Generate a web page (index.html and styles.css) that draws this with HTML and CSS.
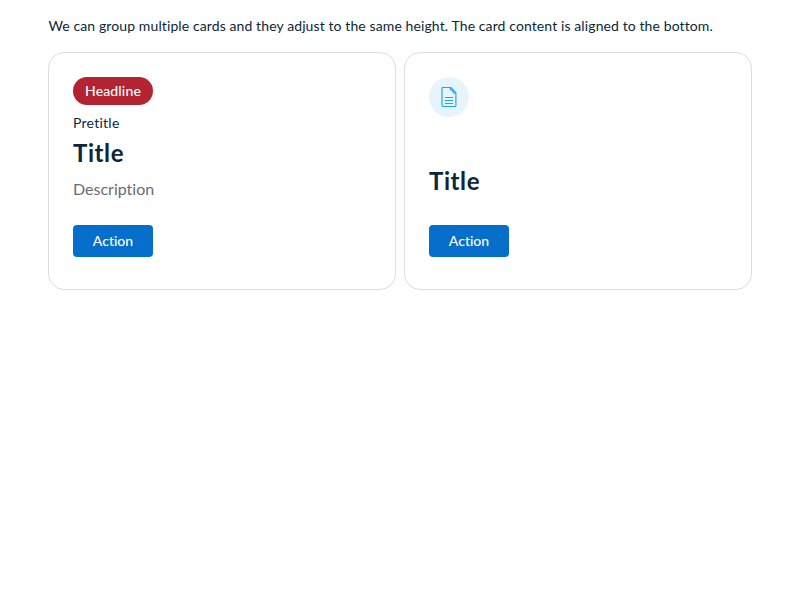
FILE: index.html
```html
<!DOCTYPE html>
<html lang="en">
<head>
<meta charset="utf-8">
<title>Card group</title>
<link rel="stylesheet" href="styles.css">
</head>
<body>
<main class="page">
  <p class="intro">We can group multiple cards and they adjust to the same height. The card content is aligned to the bottom.</p>
  <div class="card-group">
    <article class="card">
      <div class="card-header"><span class="pill">Headline</span></div>
      <div class="card-content">
        <p class="pretitle">Pretitle</p>
        <h2 class="title">Title</h2>
        <p class="description">Description</p>
        <button class="button">Action</button>
      </div>
    </article>
    <article class="card">
      <div class="card-header">
        <span class="asset">
          <svg width="24" height="24" viewBox="0 0 24 24" fill="none" stroke="#1fa4f0" stroke-width="1.15" stroke-linejoin="round" stroke-linecap="round"><path d="M5.5 2.5h8.2l5.2 5.1v13a.9.9 0 0 1-.9.9H5.9a.9.9 0 0 1-.9-.9V3a.5.5 0 0 1 .5-.5zM13.3 2.8c0 .9-.2 1.5.4 2.1.6.5 1.4.2 1.8.7.5.5.2 1.4.8 1.9.6.6 1.5.5 2.5.5M8.4 12.5h7.2M8.4 15.5h7.2M8.4 18.5h7.2"/></svg>
        </span>
      </div>
      <div class="card-content">
        <h2 class="title">Title</h2>
        <button class="button button-spaced">Action</button>
      </div>
    </article>
  </div>
</main>
</body>
</html>
```
FILE: styles.css
```css
* { box-sizing: border-box; }
body { margin: 0; background: #fff; color: #0b2739; font-family: Lato, "Noto Sans", sans-serif; font-variant-ligatures: none; }
p, h2 { margin: 0; }
.page { padding: 16px 48px; }
.intro { padding-left: 0.5px; font-size: 14px; line-height: 20px; white-space: nowrap; font-weight: 400; letter-spacing: 0.105px; }
.card-group { display: grid; grid-template-columns: 1fr 1fr; gap: 8px; margin-top: 16px; }
.card { display: flex; flex-direction: column; justify-content: space-between; height: 238px; padding: 24px 24px 32px; border: 1px solid #dddddd; border-radius: 16px; }
.card-header { display: flex; }
.pill { height: 28px; width: 80px; border-radius: 14px; background: #b32433; color: #fff; font-size: 14px; font-weight: 500; line-height: 28px; letter-spacing: 0.15px; text-align: center; }
.asset { display: flex; align-items: center; justify-content: center; width: 40px; height: 40px; border-radius: 50%; background: #e6f5fd; }
.card-content { display: flex; flex-direction: column; align-items: flex-start; }
.pretitle { font-size: 14px; font-weight: 400; line-height: 20px; margin-bottom: 4px; letter-spacing: 0.25px; }
.title { font-size: 24px; line-height: 32px; font-weight: 700; letter-spacing: 0.6px; }
.description { margin-top: 8px; color: #6b6c6f; font-size: 16px; line-height: 24px; }
.button { margin-top: 24px; width: 80px; height: 32px; padding: 0; border: 0; border-radius: 4px; background: #066fcb; color: #fff; font: 500 14px/20px Lato, "Noto Sans", sans-serif; font-variant-ligatures: none; }
.button-spaced { margin-top: 28px; }
```
